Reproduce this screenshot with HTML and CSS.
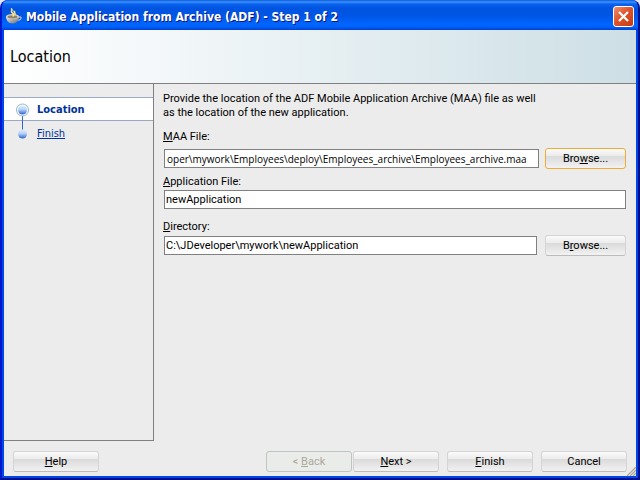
FILE: index.html
```html
<!DOCTYPE html>
<html lang="en">
<head>
    <meta charset="UTF-8">
    <meta name="viewport" content="width=device-width, initial-scale=1.0">
    <title>Mobile Application from Archive (ADF) - Step 1 of 2</title>
    <link rel="stylesheet" href="styles.css">
</head>
<body>
    <div class="window">
        <div class="titlebar">
            <svg class="app-icon" width="18" height="18" viewBox="0 0 18 18">
                <defs>
                    <linearGradient id="cup" x1="0" y1="0" x2="1" y2="1">
                        <stop offset="0" stop-color="#f4f4f0"/>
                        <stop offset="1" stop-color="#66686b"/>
                    </linearGradient>
                </defs>
                <path d="M12.500 9h2.500c1.800 0 1.200 2.600-1.200 3.200h-2" fill="none" stroke="#b4b7ba" stroke-width="1.300"/>
                <path d="M1 8c0 4 2 7.500 6.500 7.500s6.500-3.500 6.500-7.500z" fill="url(#cup)"/>
                <ellipse cx="7.500" cy="8.500" rx="6.500" ry="2.500" fill="#d4d4ce"/>
                <ellipse cx="7.500" cy="8.800" rx="5" ry="1.600" fill="#8f8468"/>
                <path d="M6 0.500c3 2-1.500 3 1.500 4.500 2 1 0 2 1 3.500M8.500 3c2.500 1 0.500 2.500 2 4" fill="none" stroke="#ffe78a" stroke-width="1.500"/>
            </svg>
            <span class="title">Mobile Application from Archive (ADF) - Step 1 of 2</span>
            <button class="close" aria-label="Close">
                <svg width="11" height="11" viewBox="0 0 11 11"><path d="M1 1l9 9M10 1l-9 9" stroke="#fff" stroke-width="2.200"/></svg>
            </button>
        </div>

        <div class="content">
            <h1 class="banner">Location</h1>

            <div class="main">
                <nav class="steps">
                    <svg class="track" width="14" height="38" viewBox="0 0 14 38">
                        <defs>
                            <linearGradient id="ball" x1="0" y1="0" x2="0" y2="1">
                                <stop offset="0" stop-color="#e2edfb"/>
                                <stop offset="0.450" stop-color="#b3d2f6"/>
                                <stop offset="1" stop-color="#2f62cf"/>
                            </linearGradient>
                        </defs>
                        <path d="M7.500 12v16" stroke="#3a62cf"/>
                        <circle cx="7.500" cy="7" r="6" fill="#fff" stroke="#8fb6cf"/>
                        <circle cx="7.500" cy="7" r="4.500" fill="url(#ball)"/>
                        <circle cx="7.500" cy="31" r="4.500" fill="url(#ball)"/>
                    </svg>
                    <div class="step active">Location</div>
                    <div class="step"><a href="#">Finish</a></div>
                </nav>

                <form class="form" id="locationForm">
                    <p class="intro">Provide the location of the ADF Mobile Application Archive (MAA) file as well<br>as the location of the new application.</p>

                    <label class="first-label" for="maaFile"><u>M</u>AA File:</label>
                    <div class="row">
                        <input class="scrolled" type="text" id="maaFile" value="oper\mywork\Employees\deploy\Employees_archive\Employees_archive.maa">
                        <button type="button" class="btn browse focused">Bro<u>w</u>se...</button>
                    </div>

                    <label for="appFile"><u>A</u>pplication File:</label>
                    <div class="row">
                        <input type="text" id="appFile" value="newApplication">
                    </div>

                    <label class="last-label" for="directory"><u>D</u>irectory:</label>
                    <div class="row wide-gap">
                        <input type="text" id="directory" value="C:\JDeveloper\mywork\newApplication">
                        <button type="button" class="btn browse">B<u>r</u>owse...</button>
                    </div>
                </form>
            </div>

            <div class="footer">
                <button class="btn help"><u>H</u>elp</button>
                <div class="pair">
                    <button class="btn" disabled>&lt; <u>B</u>ack</button>
                    <button class="btn"><u>N</u>ext &gt;</button>
                </div>
                <button class="btn"><u>F</u>inish</button>
                <button class="btn">Cancel</button>
            </div>
            <svg class="grip" width="9" height="9" viewBox="0 0 9 9">
                <path d="M0 9L9 0M3 9l6-6M6 9l3-3" stroke="#aca899" stroke-width="1.300"/>
            </svg>
        </div>
    </div>
</body>
</html>
```
FILE: styles.css
```css
* {
    box-sizing: border-box;
}

body {
    margin: 0;
    background: #dfe6f5;
    font-family: Roboto, Tahoma, sans-serif;
    font-size: 11px;
    line-height: 14px;
    color: #000;
}

.window {
    display: flex;
    flex-direction: column;
    min-height: 100vh;
    padding: 0 2px 2px;
    border: solid #0019cf;
    border-width: 0 2px 2px;
    border-color: #0019cf #00108c #00108c #0019cf;
    border-radius: 8px 8px 0 0;
    background: #0046e8;
    overflow: hidden;
}

.titlebar {
    display: flex;
    align-items: center;
    height: 30px;
    margin: 0 -2px;
    padding: 3px 3px 0;
    background: linear-gradient(#0b58d9 0, #3c93ff 2px, #0a62ee 4px, #0054e0 8px, #0055e5 16px, #0066ff 24px, #0060fa 27px, #0040d0 30px);
}

.title {
    flex: 1;
    margin-left: 3px;
    font-family: "DejaVu Sans Condensed", "Trebuchet MS", sans-serif;
    font-size: 12px;
    font-weight: bold;
    color: #fff;
    text-shadow: 1px 1px #0a1883;
    white-space: nowrap;
}

.close {
    display: flex;
    align-items: center;
    justify-content: center;
    width: 21px;
    height: 21px;
    padding: 0;
    margin-right: 1px;
    border: 1px solid #fff;
    border-radius: 3px;
    background: linear-gradient(135deg, #f0906c, #e0532c 45%, #c23a10);
}

.content {
    position: relative;
    flex: 1;
    display: flex;
    flex-direction: column;
    background: #ececec;
}

.banner {
    margin: 0;
    height: 54px;
    padding-left: 6px;
    border-bottom: 1px solid #808080;
    background: linear-gradient(90deg, #fff, #e9f1f4 45%, #cddfe5);
    font-family: "DejaVu Sans Condensed", Tahoma, sans-serif;
    font-size: 16px;
    font-weight: normal;
    line-height: 54px;
}

.main {
    flex: 1;
    display: flex;
}

.steps {
    position: relative;
    width: 150px;
    padding-top: 13px;
    border-right: 1px solid #808080;
    border-bottom: 1px solid #808080;
}

.step {
    height: 24px;
    padding-left: 33px;
    border: solid transparent;
    border-width: 1px 0;
    font-family: "DejaVu Sans Condensed", Tahoma, sans-serif;
    line-height: 23px;
    color: #003399;
}

.step.active {
    border-color: #9aaac4;
    background: #fff;
    font-weight: bold;
}

.step a {
    color: #003399;
}

.track {
    position: absolute;
    left: 11px;
    top: 19px;
}

.form {
    flex: 1;
    display: flex;
    flex-direction: column;
    padding: 8px 10px 0 9px;
}

.intro {
    margin: 0 0 10px;
    white-space: nowrap;
}

label {
    margin: 6px 0 0;
}

.first-label {
    margin: 0 0 4px;
}

.last-label {
    margin: 10px 0 1px;
}

.row {
    display: flex;
    align-items: center;
    gap: 6px;
    height: 21px;
    padding-left: 1px;
}

.wide-gap {
    gap: 8px;
}

input {
    flex: 1;
    min-width: 0;
    height: 19px;
    padding: 0 1px;
    border: 1px solid #808080;
    background: #fff;
    font: inherit;
    color: #000;
}

.scrolled {
    padding: 0 2px;
    font-family: "Open Sans", Tahoma, sans-serif;
    font-size: 10px;
}

.btn {
    width: 86px;
    height: 21px;
    padding: 0;
    border: 1px solid #d4d4d4;
    border-bottom-color: #bcbcbc;
    border-radius: 3px;
    background: linear-gradient(#fbfbfb, #ececec 35%, #dadada 36%, #e6e6e6 70%, #f2f2f2);
    font: inherit;
    color: #000;
}

.browse {
    width: 81px;
}

.focused {
    border-color: #f0ab32;
}

.btn:disabled {
    border-color: #bec4c2;
    background: #eaecea;
    color: #aca899;
}

.footer {
    display: flex;
    gap: 8px;
    padding: 10px 9px 4px;
}

.help {
    margin-right: auto;
}

.pair {
    display: flex;
    gap: 1px;
}

.grip {
    position: absolute;
    right: 0;
    bottom: 0;
}
```
